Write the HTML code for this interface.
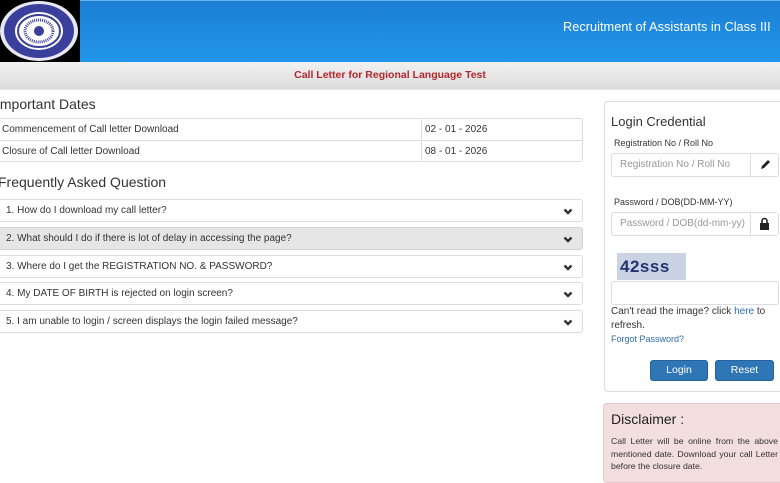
<!DOCTYPE html>
<html><head><meta charset="utf-8"><style>
*{box-sizing:border-box;margin:0;padding:0}
body{width:780px;height:470px;overflow:hidden;background:#fff;font-family:"Liberation Sans",Arial,sans-serif;color:#333;position:relative}
.hdr{position:absolute;left:0;top:0;width:780px;height:62px;background:linear-gradient(#1b7fd4,#2196ea);border-top:1px solid #6ab0ea}
.logo{position:absolute;left:0;top:0;width:80px;height:62px;background:#000}
.ttl{position:absolute;left:563px;top:19px;color:#fff;font-size:12.8px;white-space:nowrap}
.band{position:absolute;left:0;top:62px;width:780px;height:28px;background:linear-gradient(#f1f1f1,#dcdcdc);border-bottom:1px solid #e6e6e6}
.band span{position:absolute;left:0;width:780px;text-align:center;top:7px;color:#b5262b;font-weight:bold;font-size:10.5px}
.a{position:absolute}
h3{font-weight:normal;font-size:14px;color:#333}
.tbl{position:absolute;left:-2px;top:118px;width:585px;border:1px solid #ddd;border-radius:3px;font-size:10px}
.tbl div{height:21px;line-height:21px;border-top:1px solid #ddd;position:relative;padding-left:3px}
.tbl div:first-child{border-top:none}
.tbl div b{font-weight:normal;position:absolute;left:422px;top:0;height:20px;border-left:1px solid #ddd;padding-left:3px}
.faq{position:absolute;left:-2px;width:585px;height:23px;border:1px solid #ddd;border-radius:3px;font-size:10px;line-height:22px;padding-left:7px;background:#fff}
.faq.g{background:#e6e6e6;border-color:#d3d3d3}
.faq svg{position:absolute;right:9px;top:8px}
.box{position:absolute;left:604px;top:101px;width:180px;height:291px;border:1px solid #ddd;border-radius:4px}
.lbl{position:absolute;font-size:9px;color:#333}
.inp{position:absolute;left:611px;width:168px;height:24px;border:1px solid #ddd;border-radius:3px;font-size:10px;color:#999;line-height:22px;padding-left:8px;white-space:nowrap}
.inp i{position:absolute;right:0;top:0;width:28px;height:22px;border-left:1px solid #ddd;background:#fff}
.btn{position:absolute;top:360px;height:21px;background:#2f76b6;border:1px solid #26629a;border-radius:3px;color:#fff;font-size:10.5px;text-align:center;line-height:19px}
.disc{position:absolute;left:603px;top:403px;width:190px;height:80px;background:#f2dede;border:1px solid #e8c7c9;border-radius:4px}
</style></head><body>
<div class="hdr"></div>
<div class="logo"><svg width="80" height="62"><ellipse cx="39" cy="31" rx="39" ry="30" fill="#e8e8f4"/><ellipse cx="39" cy="31" rx="35" ry="27" fill="#3b3f9c"/><ellipse cx="39" cy="31" rx="24" ry="19" fill="#fff"/><ellipse cx="39" cy="31" rx="21" ry="16" fill="none" stroke="#3b3f9c" stroke-width="2"/><ellipse cx="39" cy="31" rx="14" ry="11" fill="none" stroke="#3b3f9c" stroke-width="3" stroke-dasharray="1 1"/><circle cx="39" cy="31" r="5" fill="#3b3f9c"/></svg></div>
<div class="ttl">Recruitment of Assistants in Class III</div>
<div class="band"><span>Call Letter for Regional Language Test</span></div>

<h3 class="a" style="left:-4px;top:96px">Important Dates</h3>
<div class="tbl"><div>Commencement of Call letter Download<b>02 - 01 - 2026</b></div><div>Closure of Call letter Download<b>08 - 01 - 2026</b></div></div>
<h3 class="a" style="left:-2px;top:174px">Frequently Asked Question</h3>

<div class="faq" style="top:199px">1. How do I download my call letter?<svg width="10" height="7" viewBox="0 0 10 7"><path d="M1.5 1.5l3.5 3.5 3.5-3.5" stroke="#333" stroke-width="2.4" fill="none"/></svg></div>
<div class="faq g" style="top:227px">2. What should I do if there is lot of delay in accessing the page?<svg width="10" height="7" viewBox="0 0 10 7"><path d="M1.5 1.5l3.5 3.5 3.5-3.5" stroke="#333" stroke-width="2.4" fill="none"/></svg></div>
<div class="faq" style="top:255px">3. Where do I get the REGISTRATION NO. &amp; PASSWORD?<svg width="10" height="7" viewBox="0 0 10 7"><path d="M1.5 1.5l3.5 3.5 3.5-3.5" stroke="#333" stroke-width="2.4" fill="none"/></svg></div>
<div class="faq" style="top:282px">4. My DATE OF BIRTH is rejected on login screen?<svg width="10" height="7" viewBox="0 0 10 7"><path d="M1.5 1.5l3.5 3.5 3.5-3.5" stroke="#333" stroke-width="2.4" fill="none"/></svg></div>
<div class="faq" style="top:310px">5. I am unable to login / screen displays the login failed message?<svg width="10" height="7" viewBox="0 0 10 7"><path d="M1.5 1.5l3.5 3.5 3.5-3.5" stroke="#333" stroke-width="2.4" fill="none"/></svg></div>

<div class="box"></div>
<div class="a" style="left:611px;top:114px;font-size:13px">Login Credential</div>
<div class="lbl" style="left:614px;top:138px">Registration No / Roll No</div>
<div class="inp" style="top:153px">Registration No / Roll No<i><svg width="28" height="22"><path d="M10 15l1-3 6-6 2 2-6 6z" fill="#222"/></svg></i></div>
<div class="lbl" style="left:614px;top:197px">Password / DOB(DD-MM-YY)</div>
<div class="inp" style="top:212px">Password / DOB(dd-mm-yy)<i><svg width="28" height="22"><rect x="9" y="10" width="9" height="7" fill="#222"/><path d="M11 10V8a2.5 2.5 0 0 1 5 0v2" stroke="#222" stroke-width="1.6" fill="none"/></svg></i></div>
<div class="a" style="left:617px;top:253px;width:69px;height:27px;background:#c9d3e4;color:#24346f;font-weight:bold;font-size:17px;line-height:27px;padding-left:3px;letter-spacing:0.5px">42sss</div>
<div class="inp" style="top:281px"></div>
<div class="a" style="left:611px;top:305px;font-size:10px;line-height:14px;width:170px">Can't read the image? click <span style="color:#2a6db3">here</span> to refresh.</div>
<div class="a" style="left:611px;top:334px;font-size:9px;color:#2a6db3">Forgot Password?</div>
<div class="btn" style="left:650px;width:58px">Login</div>
<div class="btn" style="left:715px;width:59px">Reset</div>

<div class="disc"></div>
<div class="a" style="left:611px;top:411px;font-size:14px;color:#222">Disclaimer :</div>
<div class="a" style="left:611px;top:435px;width:167px;font-size:8.7px;line-height:12.5px;text-align:justify;color:#333">Call Letter will be online from the above mentioned date. Download your call Letter before the closure date.</div>
</body></html>
